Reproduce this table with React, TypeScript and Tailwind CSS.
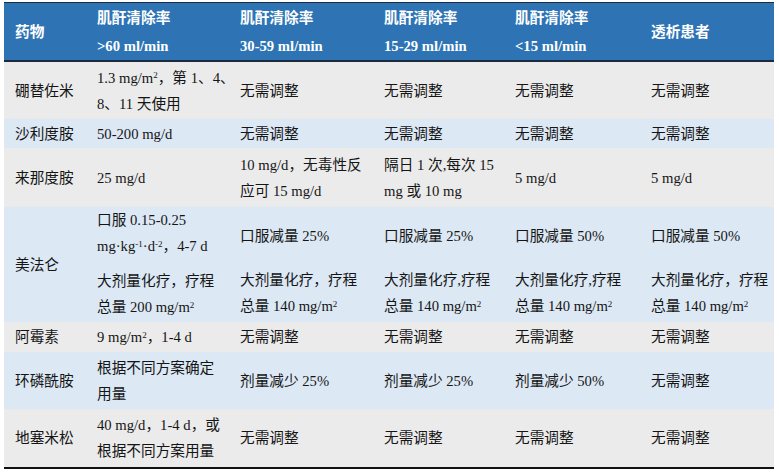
import type { ReactNode } from "react"

const cols = "grid grid-cols-[83px_143px_144px_131px_136px_133px]"

function Cell({ children, first }: { children: ReactNode; first?: boolean }) {
  return (
    <div className={`flex flex-col justify-center whitespace-nowrap leading-[26px] ${first ? "pl-[11px]" : "pl-[10px]"}`}>
      {children}
    </div>
  )
}

function Row({ cells, h, blue }: { cells: ReactNode[]; h: string; blue?: boolean }) {
  return (
    <div className={`${cols} ${h} ${blue ? "bg-[#dce8f4]" : "bg-[#ebebeb]"}`}>
      {cells.map((c, i) => (
        <Cell key={i} first={i === 0}>
          {c}
        </Cell>
      ))}
    </div>
  )
}

const m2 = (
  <>
    mg/m<sup className="text-[9px]">2</sup>
  </>
)

const ok = "无需调整"

export default function App() {
  return (
    <div className="w-[779px] h-[473px] bg-white pt-[2px] pl-[4px] font-['Liberation_Serif','Noto_Sans_CJK_SC',serif] text-[14.67px] text-[#151515]">
      <div className="w-[770px]">
        {/* header */}
        <div className={`${cols} h-[60px] bg-[#2e74b5] border-t border-b-2 border-[#1b2a3c] text-white font-bold whitespace-nowrap`}>
          <div className="flex items-center pl-[11px]">药物</div>
          {[">60 ml/min", "30-59 ml/min", "15-29 ml/min", "<15 ml/min"].map((r) => (
            <div key={r} className="flex flex-col justify-center pl-[10px] leading-[28px]">
              <span>肌酐清除率</span>
              <span>{r}</span>
            </div>
          ))}
          <div className="flex items-center pl-[10px]">透析患者</div>
        </div>

        <Row
          h="h-[57px]"
          cells={[
            "硼替佐米",
            <>
              <span>1.3 {m2}，第 1、4、</span>
              <span>8、11 天使用</span>
            </>,
            ok,
            ok,
            ok,
            ok,
          ]}
        />
        <Row h="h-[29px]" blue cells={["沙利度胺", "50-200 mg/d", ok, ok, ok, ok]} />
        <Row
          h="h-[59px]"
          cells={[
            "来那度胺",
            "25 mg/d",
            <>
              <span>10 mg/d，无毒性反</span>
              <span>应可 15 mg/d</span>
            </>,
            <>
              <span>隔日 1 次,每次 15</span>
              <span>mg 或 10 mg</span>
            </>,
            "5 mg/d",
            "5 mg/d",
          ]}
        />

        {/* 美法仑 */}
        <div className={`${cols} h-[115px] bg-[#dce8f4] leading-[26px] whitespace-nowrap`}>
          <div className="flex items-center pl-[11px]">美法仑</div>
          <div className="flex flex-col pl-[10px]">
            <span>口服 0.15-0.25</span>
            <span>
              mg·kg<sup className="text-[9px]">-1</sup>·d<sup className="text-[9px]">-2</sup>，4-7 d
            </span>
            <span className="mt-[9px]">大剂量化疗，疗程</span>
            <span>总量 200 {m2}</span>
          </div>
          {[
            ["口服减量 25%", "大剂量化疗，疗程"],
            ["口服减量 25%", "大剂量化疗,疗程"],
            ["口服减量 50%", "大剂量化疗,疗程"],
            ["口服减量 50%", "大剂量化疗，疗程"],
          ].map(([a, b], i) => (
            <div key={i} className="flex flex-col pl-[10px] pt-[16px]">
              <span>{a}</span>
              <span className="mt-[18px]">{b}</span>
              <span>总量 140 {m2}</span>
            </div>
          ))}
        </div>

        <Row h="h-[30px]" cells={["阿霉素", <span>9 {m2}，1-4 d</span>, ok, ok, ok, ok]} />
        <Row
          h="h-[57px]"
          blue
          cells={[
            "环磷酰胺",
            <>
              <span>根据不同方案确定</span>
              <span>用量</span>
            </>,
            "剂量减少 25%",
            "剂量减少 25%",
            "剂量减少 50%",
            ok,
          ]}
        />
        <Row
          h="h-[58px]"
          cells={[
            "地塞米松",
            <>
              <span>40 mg/d，1-4 d，或</span>
              <span>根据不同方案用量</span>
            </>,
            ok,
            ok,
            ok,
            ok,
          ]}
        />
        <div className="h-[2px] bg-[#111]" />
      </div>
    </div>
  )
}
